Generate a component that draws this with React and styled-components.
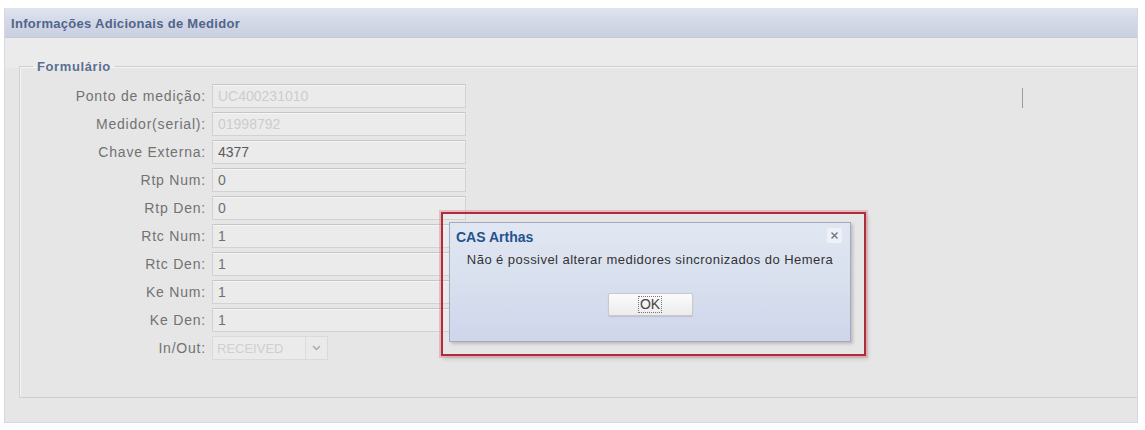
import React from "react";
import styled, { createGlobalStyle } from "styled-components";

const Global = createGlobalStyle`
  html, body { margin: 0; padding: 0; background: #ffffff; }
  body { font-family: "Liberation Sans", Arial, sans-serif; }
  * { box-sizing: border-box; }
`;

const Page = styled.div`
  position: relative;
  width: 1145px;
  height: 430px;
  padding: 8px 7px 7px 4px;
`;

const Panel = styled.div`
  display: flex;
  flex-direction: column;
  height: 415px;
  border: 1px solid #d3d8e2;
  border-top: none;
  background: #e7e7e7;
`;

const Header = styled.div`
  height: 30px;
  display: flex;
  align-items: center;
  padding: 2px 0 0 6px;
  background: linear-gradient(#dfe4ef 0%, #d3d9e7 45%, #c9d0e1 100%);
  border-bottom: 1px solid #c4cad8;
  font-size: 13px;
  font-weight: bold;
  letter-spacing: 0.3px;
  color: #51658a;
`;

const Body = styled.div`
  flex: 1;
  padding: 21px 0 20px 14px;
  background: linear-gradient(#ebebeb 0px, #ebebeb 29px, #e6e6e6 30px);
`;

const Fieldset = styled.fieldset`
  margin: 0;
  padding: 10px 0 37px 0;
  border: 1px solid #cfcfcf;
  border-right: none;
  box-shadow: inset 1px 1px 0 #f4f4f4;
`;

const Legend = styled.legend`
  margin-left: 13px;
  padding: 0 4px;
  font-size: 13px;
  font-weight: bold;
  letter-spacing: 0.6px;
  color: #5b6f92;
`;

const Grid = styled.div`
  display: grid;
  grid-template-columns: 186px 254px;
  column-gap: 6px;
  row-gap: 4px;
  grid-auto-rows: 24px;
`;

const Label = styled.label`
  display: flex;
  align-items: center;
  justify-content: flex-end;
  font-size: 14px;
  letter-spacing: 0.8px;
  color: #727272;
  white-space: nowrap;
`;

const Input = styled.div`
  display: flex;
  align-items: center;
  padding-left: 5px;
  border: 1px solid #d2d2d2;
  border-top-color: #c6c6c6;
  background: #ebebeb;
  box-shadow: inset 0 1px 0 #f5f5f5;
  font-size: 14px;
  color: ${(p) => (p.$disabled ? "#cdcdcd" : "#707070")};
  ${(p) => (p.$dark ? "color: #5a5a5a;" : "")}
`;

const Combo = styled.div`
  display: flex;
  width: 116px;
  height: 24px;
  border: 1px solid #dadada;
  background: #ebebeb;
`;

const ComboText = styled.div`
  flex: 1;
  display: flex;
  align-items: center;
  padding-left: 4px;
  font-size: 13px;
  color: #cfcfcf;
`;

const Trigger = styled.div`
  width: 22px;
  display: flex;
  align-items: center;
  justify-content: center;
  border-left: 1px solid #dcdcdc;
  background: #eaeaea;
`;

const Cursor = styled.div`
  position: absolute;
  left: 1022px;
  top: 88px;
  width: 1px;
  height: 20px;
  background: #9c9c9c;
`;

const Highlight = styled.div`
  position: absolute;
  left: 441px;
  top: 212px;
  width: 425px;
  height: 144px;
  border: 2px solid #a8303c;
  box-shadow: 0 0 0 2px rgba(230, 150, 160, 0.55), 2px 3px 4px rgba(0, 0, 0, 0.15);
`;

const Dialog = styled.div`
  position: absolute;
  left: 449px;
  top: 222px;
  width: 402px;
  height: 120px;
  display: flex;
  flex-direction: column;
  border: 1px solid #a3acbe;
  background: linear-gradient(#e1e7f2 0%, #d9e0ee 45%, #cfd6ec 100%);
  box-shadow: 2px 2px 3px rgba(0, 0, 0, 0.18);
`;

const DialogHead = styled.div`
  display: flex;
  align-items: center;
  justify-content: space-between;
  height: 26px;
  padding: 2px 8px 0 6px;
`;

const DialogTitle = styled.div`
  font-size: 14px;
  font-weight: bold;
  color: #24538f;
`;

const CloseBtn = styled.div`
  width: 15px;
  height: 15px;
  display: flex;
  align-items: center;
  justify-content: center;
  background: #eef1f7;
  border-radius: 2px;
  margin-top: -3px;
`;

const Message = styled.div`
  text-align: center;
  font-size: 13px;
  letter-spacing: 0.45px;
  color: #333;
  padding-top: 3px;
`;

const Footer = styled.div`
  display: flex;
  justify-content: center;
  padding-top: 26px;
`;

const OkButton = styled.div`
  width: 85px;
  height: 23px;
  display: flex;
  align-items: center;
  justify-content: center;
  border: 1px solid #c9c9c9;
  border-radius: 2px;
  background: linear-gradient(#fbfbfb, #ececec);
  box-shadow: 0 1px 1px rgba(0, 0, 0, 0.12);
`;

const OkText = styled.span`
  font-size: 14px;
  color: #444;
  outline: 1px dotted #777;
  outline-offset: 0px;
  padding: 0 1px;
  line-height: 15px;
`;

const fields = [
  { label: "Ponto de medição:", value: "UC400231010", disabled: true },
  { label: "Medidor(serial):", value: "01998792", disabled: true },
  { label: "Chave Externa:", value: "4377", dark: true },
  { label: "Rtp Num:", value: "0" },
  { label: "Rtp Den:", value: "0" },
  { label: "Rtc Num:", value: "1" },
  { label: "Rtc Den:", value: "1" },
  { label: "Ke Num:", value: "1" },
  { label: "Ke Den:", value: "1" },
];

export default function App() {
  return (
    <>
      <Global />
      <Page>
        <Panel>
          <Header>Informações Adicionais de Medidor</Header>
          <Body>
            <Fieldset>
              <Legend>Formulário</Legend>
              <Grid>
                {fields.map((f) => (
                  <React.Fragment key={f.label}>
                    <Label>{f.label}</Label>
                    <Input $disabled={f.disabled} $dark={f.dark}>
                      {f.value}
                    </Input>
                  </React.Fragment>
                ))}
                <Label>In/Out:</Label>
                <Combo>
                  <ComboText>RECEIVED</ComboText>
                  <Trigger>
                    <svg width="9" height="6" viewBox="0 0 9 6">
                      <path d="M1 1 L4.5 4.5 L8 1" fill="none" stroke="#a8a8a8" strokeWidth="1.4" />
                    </svg>
                  </Trigger>
                </Combo>
              </Grid>
            </Fieldset>
          </Body>
        </Panel>
        <Cursor />
        <Highlight />
        <Dialog>
          <DialogHead>
            <DialogTitle>CAS Arthas</DialogTitle>
            <CloseBtn>
              <svg width="9" height="9" viewBox="0 0 9 9">
                <path d="M1.5 1.5 L7.5 7.5 M7.5 1.5 L1.5 7.5" stroke="#6f7580" strokeWidth="1.4" />
              </svg>
            </CloseBtn>
          </DialogHead>
          <Message>Não é possivel alterar medidores sincronizados do Hemera</Message>
          <Footer>
            <OkButton>
              <OkText>OK</OkText>
            </OkButton>
          </Footer>
        </Dialog>
      </Page>
    </>
  );
}
